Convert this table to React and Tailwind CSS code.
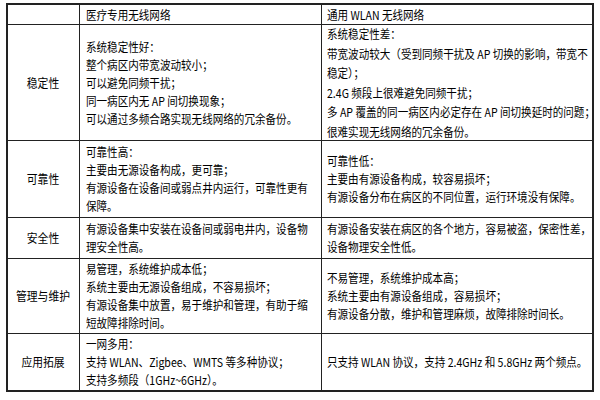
const rows = [
  {
    label: '稳定性',
    left: [
      '系统稳定性好：',
      '整个病区内带宽波动较小；',
      '可以避免同频干扰；',
      '同一病区内无 AP 间切换现象；',
      '可以通过多频合路实现无线网络的冗余备份。',
    ],
    right: [
      '系统稳定性差：',
      '带宽波动较大（受到同频干扰及 AP 切换的影响，带宽不',
      '稳定）；',
      '2.4G 频段上很难避免同频干扰；',
      '多 AP 覆盖的同一病区内必定存在 AP 间切换延时的问题；',
      '很难实现无线网络的冗余备份。',
    ],
    leftLead: 'leading-[18px]',
    rightLead: 'leading-[19.5px]',
  },
  {
    label: '可靠性',
    left: [
      '可靠性高：',
      '主要由无源设备构成，更可靠；',
      '有源设备在设备间或弱点井内运行，可靠性更有',
      '保障。',
    ],
    right: [
      '可靠性低：',
      '主要由有源设备构成，较容易损坏；',
      '有源设备分布在病区的不同位置，运行环境没有保障。',
    ],
    leftLead: 'leading-[18px]',
    rightLead: 'leading-[18px]',
  },
  {
    label: '安全性',
    left: ['有源设备集中安装在设备间或弱电井内，设备物', '理安全性高。'],
    right: ['有源设备安装在病区的各个地方，容易被盗，保密性差，', '设备物理安全性低。'],
    leftLead: 'leading-[18px]',
    rightLead: 'leading-[18px]',
  },
  {
    label: '管理与维护',
    left: [
      '易管理，系统维护成本低；',
      '系统主要由无源设备组成，不容易损坏；',
      '有源设备集中放置，易于维护和管理，有助于缩',
      '短故障排除时间。',
    ],
    right: [
      '不易管理，系统维护成本高；',
      '系统主要由有源设备组成，容易损坏；',
      '有源设备分散，维护和管理麻烦，故障排除时间长。',
    ],
    leftLead: 'leading-[18px]',
    rightLead: 'leading-[18px]',
  },
  {
    label: '应用拓展',
    left: ['一网多用：', '支持 WLAN、Zigbee、WMTS 等多种协议；', '支持多频段（1GHz~6GHz）。'],
    right: ['只支持 WLAN 协议，支持 2.4GHz 和 5.8GHz 两个频点。'],
    leftLead: 'leading-[18px]',
    rightLead: 'leading-[18px]',
  },
];

const Lines = ({ items, lead, extra }) => (
  <div className={`flex flex-col justify-center ${extra}`}>
    {items.map((t, i) => (
      <div key={i} className={`whitespace-nowrap origin-left scale-x-[0.88] ${lead}`}>
        {t}
      </div>
    ))}
  </div>
);

const App = () => {
  return (
    <div
      className="w-[600px] h-[400px] bg-white overflow-hidden pt-[3px] pl-[6px] text-[12px] text-black"
      style={{ fontFamily: '"Noto Sans CJK SC", "Liberation Sans", sans-serif' }}
    >
      <div className="w-[588px] border-2 border-[#222] grid grid-cols-[72px_242px_270px] grid-rows-[20px_116px_77px_41px_75px_56px]">
        <div className="border-r border-b border-[#222]" />
        <Lines items={['医疗专用无线网络']} lead="leading-[18px]" extra="border-r border-b border-[#222] pl-[6px]" />
        <Lines items={['通用 WLAN 无线网络']} lead="leading-[18px]" extra="border-b border-[#222] pl-[5px]" />

        {rows.map((r, i) => {
          const last = i === rows.length - 1;
          return [
            <div
              key={`l${i}`}
              className={`border-r border-[#222] flex items-center justify-center ${last ? '' : 'border-b'}`}
            >
              <span className="scale-x-[0.9] whitespace-nowrap">{r.label}</span>
            </div>,
            <Lines
              key={`a${i}`}
              items={r.left}
              lead={r.leftLead}
              extra={`border-r border-[#222] pl-[6px] ${last ? '' : 'border-b'}`}
            />,
            <Lines
              key={`b${i}`}
              items={r.right}
              lead={r.rightLead}
              extra={`border-[#222] pl-[5px] ${last ? '' : 'border-b'}`}
            />,
          ];
        })}
      </div>
    </div>
  );
};

export default App;
